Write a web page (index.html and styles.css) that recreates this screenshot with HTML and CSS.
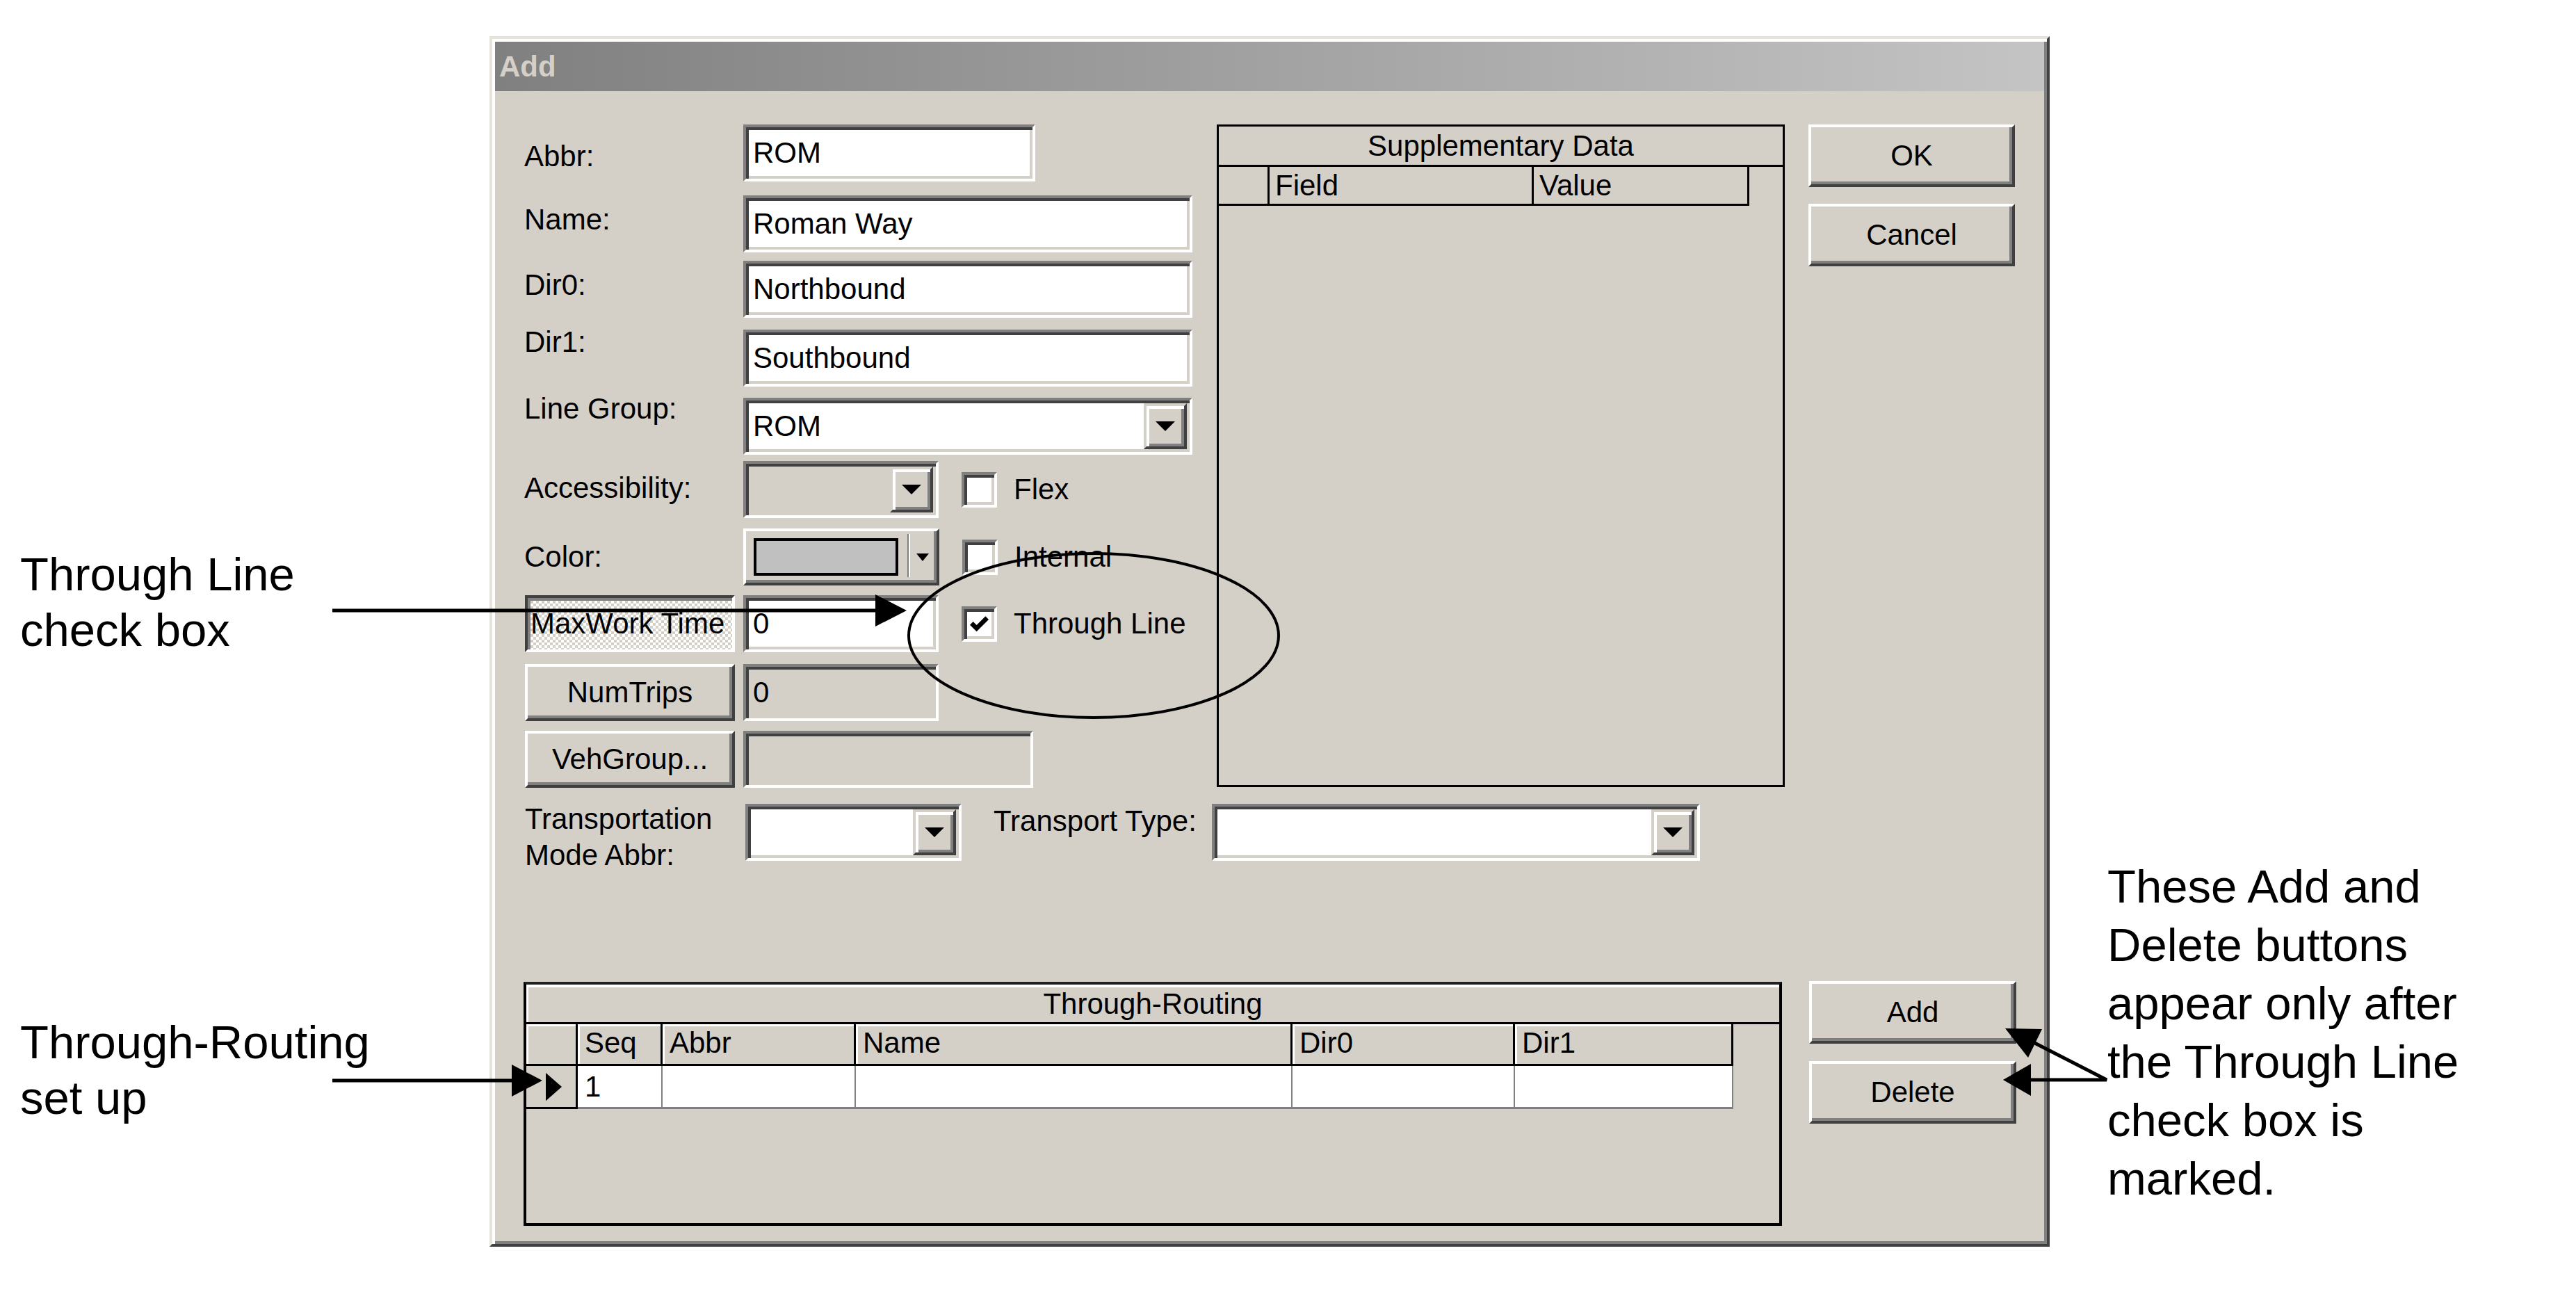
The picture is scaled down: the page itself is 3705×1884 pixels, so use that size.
FILE: index.html
```html
<!DOCTYPE html>
<html lang="en">
<head>
    <meta charset="UTF-8">
    <meta name="viewport" content="width=device-width, initial-scale=1.0">
    <title>Add Line - Through Line</title>
    <link rel="stylesheet" href="styles.css">
</head>
<body>
<div class="page">
    <div class="notes-left">
        <p class="note note-line">Through Line<br>check box</p>
        <p class="note note-route">Through-Routing<br>set up</p>
    </div>

    <div class="dialog">
        <div class="titlebar">Add</div>
        <div class="dlg-body">
            <div class="top">
                <div class="form">
                    <span class="lab lab-abbr">Abbr:</span>
                    <div class="field w-abbr">ROM</div>

                    <span class="lab lab-name">Name:</span>
                    <div class="field w-long">Roman Way</div>

                    <span class="lab lab-dir0">Dir0:</span>
                    <div class="field w-long">Northbound</div>

                    <span class="lab lab-dir1">Dir1:</span>
                    <div class="field w-long">Southbound</div>

                    <span class="lab lab-group">Line Group:</span>
                    <div class="combo w-long"><span>ROM</span><span class="drop"><i class="tri"></i></span></div>

                    <span class="lab lab-access">Accessibility:</span>
                    <div class="inline">
                        <div class="combo combo-off w-short"><span class="drop"><i class="tri"></i></span></div>
                        <span class="check"></span><span class="check-lab">Flex</span>
                    </div>

                    <span class="lab lab-color">Color:</span>
                    <div class="inline">
                        <div class="colorpick"><span class="swatch"></span><span class="cp-sep"></span><i class="tri tri-sm"></i></div>
                        <span class="check"></span><span class="check-lab">Internal</span>
                    </div>

                    <button class="btn btn-form btn-down">MaxWork Time</button>
                    <div class="inline">
                        <div class="field w-short">0</div>
                        <span class="check">
                            <svg class="tick" viewBox="0 0 7 7"><polyline points="0.6,3.2 2.5,5.1 6.4,1.2"/></svg>
                        </span>
                        <span class="check-lab">Through Line</span>
                    </div>

                    <button class="btn btn-form">NumTrips</button>
                    <div class="field field-off w-short">0</div>

                    <button class="btn btn-form">VehGroup...</button>
                    <div class="field field-off w-veh"></div>
                </div>

                <div class="supp">
                    <div class="supp-title">Supplementary Data</div>
                    <div class="supp-head">
                        <span class="hc hc-ind"></span>
                        <span class="hc hc-field">Field</span>
                        <span class="hc hc-val">Value</span>
                    </div>
                </div>

                <div class="side">
                    <button class="btn">OK</button>
                    <button class="btn">Cancel</button>
                </div>
            </div>

            <div class="mode">
                <span class="lab lab-mode">Transportation<br>Mode Abbr:</span>
                <div class="combo w-mode"><span class="drop"><i class="tri"></i></span></div>
                <span class="lab lab-type">Transport Type:</span>
                <div class="combo w-type"><span class="drop"><i class="tri"></i></span></div>
            </div>

            <div class="bottom">
                <div class="route">
                    <div class="rt-title">Through-Routing</div>
                    <div class="rt-head">
                        <span class="rc c-ind"></span>
                        <span class="rc c-seq">Seq</span>
                        <span class="rc c-abbr">Abbr</span>
                        <span class="rc c-name">Name</span>
                        <span class="rc c-dir0">Dir0</span>
                        <span class="rc c-dir1">Dir1</span>
                    </div>
                    <div class="rt-row">
                        <span class="rd c-ind">
                            <svg class="cur" viewBox="0 0 24 42"><polygon points="0,0 24,21 0,42"/></svg>
                        </span>
                        <span class="rd c-seq">1</span>
                        <span class="rd c-abbr"></span>
                        <span class="rd c-name"></span>
                        <span class="rd c-dir0"></span>
                        <span class="rd c-dir1"></span>
                    </div>
                </div>
                <div class="side side-route">
                    <button class="btn">Add</button>
                    <button class="btn">Delete</button>
                </div>
            </div>
        </div>
    </div>

    <p class="note note-right">These Add and<br>Delete buttons<br>appear only after<br>the Through Line<br>check box is<br>marked.</p>

    <svg class="marks" width="3705" height="1884" viewBox="0 0 3705 1884">
        <g stroke="#000" fill="none">
            <line x1="478" y1="878" x2="1266" y2="878" stroke-width="5"/>
            <line x1="478" y1="1554" x2="742" y2="1554" stroke-width="5"/>
            <ellipse cx="1573" cy="914" rx="266" ry="118" stroke-width="4"/>
            <polyline points="2905,1489 3030,1553 2918,1553" stroke-width="5"/>
        </g>
        <g fill="#000">
            <polygon points="1259,855 1304,878 1259,901"/>
            <polygon points="736,1531 780,1554 736,1577"/>
            <polygon points="2921,1530 2881,1553 2921,1576"/>
            <polygon points="2884,1479 2937,1480 2917,1521"/>
        </g>
    </svg>
</div>
</body>
</html>
```

FILE: styles.css
```css
body {
    margin: 0;
    background: #fff;
    font-family: "Liberation Sans", Arial, sans-serif;
    color: #000;
}
.page {
    position: relative;
    display: flex;
    align-items: flex-start;
    width: 3705px;
    height: 1884px;
    overflow: hidden;
}

/* callout text around the screenshot */
.notes-left {
    flex: none;
    width: 704px;
    display: flex;
    flex-direction: column;
}
.note {
    margin: 0;
    font-size: 67px;
    line-height: 80px;
    white-space: nowrap;
}
.note-line {
    margin: 786px 0 0 29px;
}
.note-route {
    margin: 513px 0 0 29px;
}
.note-right {
    margin: 1233px 0 0 83px;
    line-height: 84px;
}
.marks {
    position: absolute;
    top: 0;
    left: 0;
    pointer-events: none;
}

/* the dialog window */
.dialog {
    flex: none;
    box-sizing: border-box;
    width: 2244px;
    height: 1741px;
    margin-top: 52px;
    padding: 4px;
    background: #d4d0c8;
    border: 4px solid;
    border-color: #e6e3dd #404040 #404040 #e6e3dd;
    box-shadow: inset 4px 4px #fff, inset -4px -4px #808080;
    font-size: 42px;
}
.titlebar {
    height: 71px;
    line-height: 71px;
    padding-left: 6px;
    background: linear-gradient(to right, #808080, #c4c4c4);
    color: #d4d0c8;
    font-weight: bold;
    font-size: 42px;
}
.dlg-body {
    padding: 48px 0 0 42px;
}
.top {
    display: flex;
    height: 955px;
}
.form {
    width: 996px;
    display: grid;
    grid-template-columns: 315px 1fr;
    grid-template-rows: 102px 94px 99px 98px 91px 97px 96px 99px 96px 83px;
    align-items: start;
}
.lab {
    line-height: 49px;
    white-space: nowrap;
}
.lab-abbr { margin-top: 21px; }
.lab-name { margin-top: 10px; }
.lab-dir0 { margin-top: 10px; }
.lab-dir1 { margin-top: -7px; }
.lab-group { margin-top: -9px; }
.lab-access { margin-top: 14px; }
.lab-color { margin-top: 16px; }

.inline {
    display: flex;
    align-items: center;
}

/* sunken edit box */
.field, .combo {
    box-sizing: border-box;
    height: 82px;
    display: flex;
    align-items: center;
    padding: 0 10px;
    background: #fff;
    border: 4px solid;
    border-color: #808080 #fff #fff #808080;
    box-shadow: inset 4px 4px #404040, inset -4px -4px #d4d0c8;
    white-space: nowrap;
    overflow: hidden;
}
.field-off, .combo-off {
    background: #d4d0c8;
}
.w-abbr { width: 420px; }
.w-long { width: 646px; }
.w-short { width: 281px; }
.w-veh { width: 417px; }
.w-mode { width: 311px; }
.w-type { width: 702px; }

.combo {
    padding-right: 0;
}
.drop {
    box-sizing: border-box;
    align-self: stretch;
    width: 62px;
    margin: 4px 4px 4px auto;
    display: flex;
    align-items: center;
    justify-content: center;
    background: #d4d0c8;
    border: 4px solid;
    border-color: #d4d0c8 #404040 #404040 #d4d0c8;
    box-shadow: inset 4px 4px #fff, inset -4px -4px #808080;
}
.tri {
    width: 0;
    height: 0;
    border-left: 14px solid transparent;
    border-right: 14px solid transparent;
    border-top: 14px solid #000;
}
.tri-sm {
    margin-left: 9px;
    border-left-width: 9px;
    border-right-width: 9px;
    border-top-width: 11px;
}

/* owner drawn colour combo */
.colorpick {
    box-sizing: border-box;
    width: 282px;
    height: 82px;
    display: flex;
    align-items: center;
    padding-left: 11px;
    background: #d4d0c8;
    border: 4px solid;
    border-color: #fff #404040 #404040 #fff;
    box-shadow: inset -4px -4px #808080;
}
.swatch {
    box-sizing: border-box;
    width: 208px;
    height: 54px;
    background: #c0c0c0;
    border: 4px solid #000;
}
.cp-sep {
    align-self: stretch;
    width: 2px;
    margin: 4px 0 8px 13px;
    background: #808080;
    border-right: 2px solid #fff;
}

.check {
    box-sizing: border-box;
    flex: none;
    width: 51px;
    height: 51px;
    margin-left: 33px;
    display: flex;
    align-items: center;
    justify-content: center;
    background: #fff;
    border: 4px solid;
    border-color: #808080 #fff #fff #808080;
    box-shadow: inset 4px 4px #404040, inset -4px -4px #d4d0c8;
}
.tick {
    width: 27px;
    height: 27px;
    fill: none;
    stroke: #000;
    stroke-width: 1.7;
}
.check-lab {
    margin-left: 24px;
    white-space: nowrap;
}

/* push buttons */
.btn {
    box-sizing: border-box;
    height: 90px;
    margin: 0;
    padding: 0;
    display: flex;
    align-items: center;
    justify-content: center;
    font: inherit;
    color: #000;
    background: #d4d0c8;
    border: 4px solid;
    border-color: #fff #404040 #404040 #fff;
    box-shadow: inset -4px -4px #808080;
    white-space: nowrap;
    overflow: hidden;
}
.btn-form {
    width: 302px;
    height: 82px;
    margin-left: 1px;
}
.btn-down {
    justify-content: flex-start;
    padding-left: 4px;
    border-color: #404040 #fff #fff #404040;
    box-shadow: inset 4px 4px #808080;
    background: repeating-conic-gradient(#fff 0 25%, #d4d0c8 0 50%);
    background-size: 8px 8px;
}
.side {
    flex: none;
    width: 297px;
    margin-left: 34px;
    display: flex;
    flex-direction: column;
    gap: 24px;
}

/* supplementary data grid */
.supp {
    flex: none;
    box-sizing: border-box;
    width: 817px;
    height: 953px;
    border: 3px solid #000;
}
.supp-title {
    height: 55px;
    line-height: 55px;
    text-align: center;
    border-bottom: 3px solid #000;
}
.supp-head {
    display: flex;
    width: 760px;
    height: 53px;
    border-bottom: 3px solid #000;
    border-right: 3px solid #000;
}
.hc {
    box-sizing: border-box;
    padding-left: 8px;
    line-height: 53px;
}
.hc-ind {
    width: 73px;
    border-right: 3px solid #000;
}
.hc-field {
    width: 380px;
    border-right: 3px solid #000;
}
.hc-val {
    flex: 1;
}

/* transport mode row */
.mode {
    display: flex;
    align-items: flex-start;
    height: 82px;
    margin-top: 22px;
}
.lab-mode {
    width: 317px;
    line-height: 52px;
    margin-top: -4px;
    margin-left: 1px;
}
.lab-type {
    width: 314px;
    margin-left: 46px;
    line-height: 52px;
    margin-top: -1px;
}

/* through routing grid */
.bottom {
    display: flex;
    align-items: flex-start;
    margin-top: 173px;
}
.route {
    flex: none;
    box-sizing: border-box;
    width: 1810px;
    height: 351px;
    margin: 1px 0 0 -1px;
    border: 4px solid #000;
    border-top-color: #202020;
    background: #d4d0c8;
}
.rt-title {
    height: 54px;
    line-height: 56px;
    text-align: center;
    border-bottom: 3px solid #000;
    box-shadow: inset 3px 4px #fff;
}
.rt-head, .rt-row {
    display: flex;
    width: 1736px;
}
.rt-head {
    height: 57px;
    border-bottom: 3px solid #000;
}
.rt-row {
    height: 62px;
}
.rc, .rd {
    box-sizing: border-box;
    padding-left: 10px;
}
.rc {
    line-height: 54px;
    border-right: 3px solid #000;
    box-shadow: inset 3px 3px #fff;
}
.rd {
    line-height: 60px;
    background: #fff;
    border-right: 2px solid #808080;
    border-bottom: 3px solid #808080;
}
.rd.c-ind {
    display: flex;
    align-items: center;
    padding-left: 28px;
    background: #d4d0c8;
    border-right: 3px solid #000;
    border-bottom: 3px solid #000;
}
.cur {
    width: 23px;
    height: 42px;
    fill: #000;
}
.c-ind { width: 74px; }
.c-seq { width: 122px; }
.c-abbr { width: 278px; }
.c-name { width: 628px; }
.c-dir0 { width: 320px; }
.c-dir1 { width: 314px; }
.side-route {
    width: 298px;
    margin-left: 39px;
    gap: 25px;
}
```
